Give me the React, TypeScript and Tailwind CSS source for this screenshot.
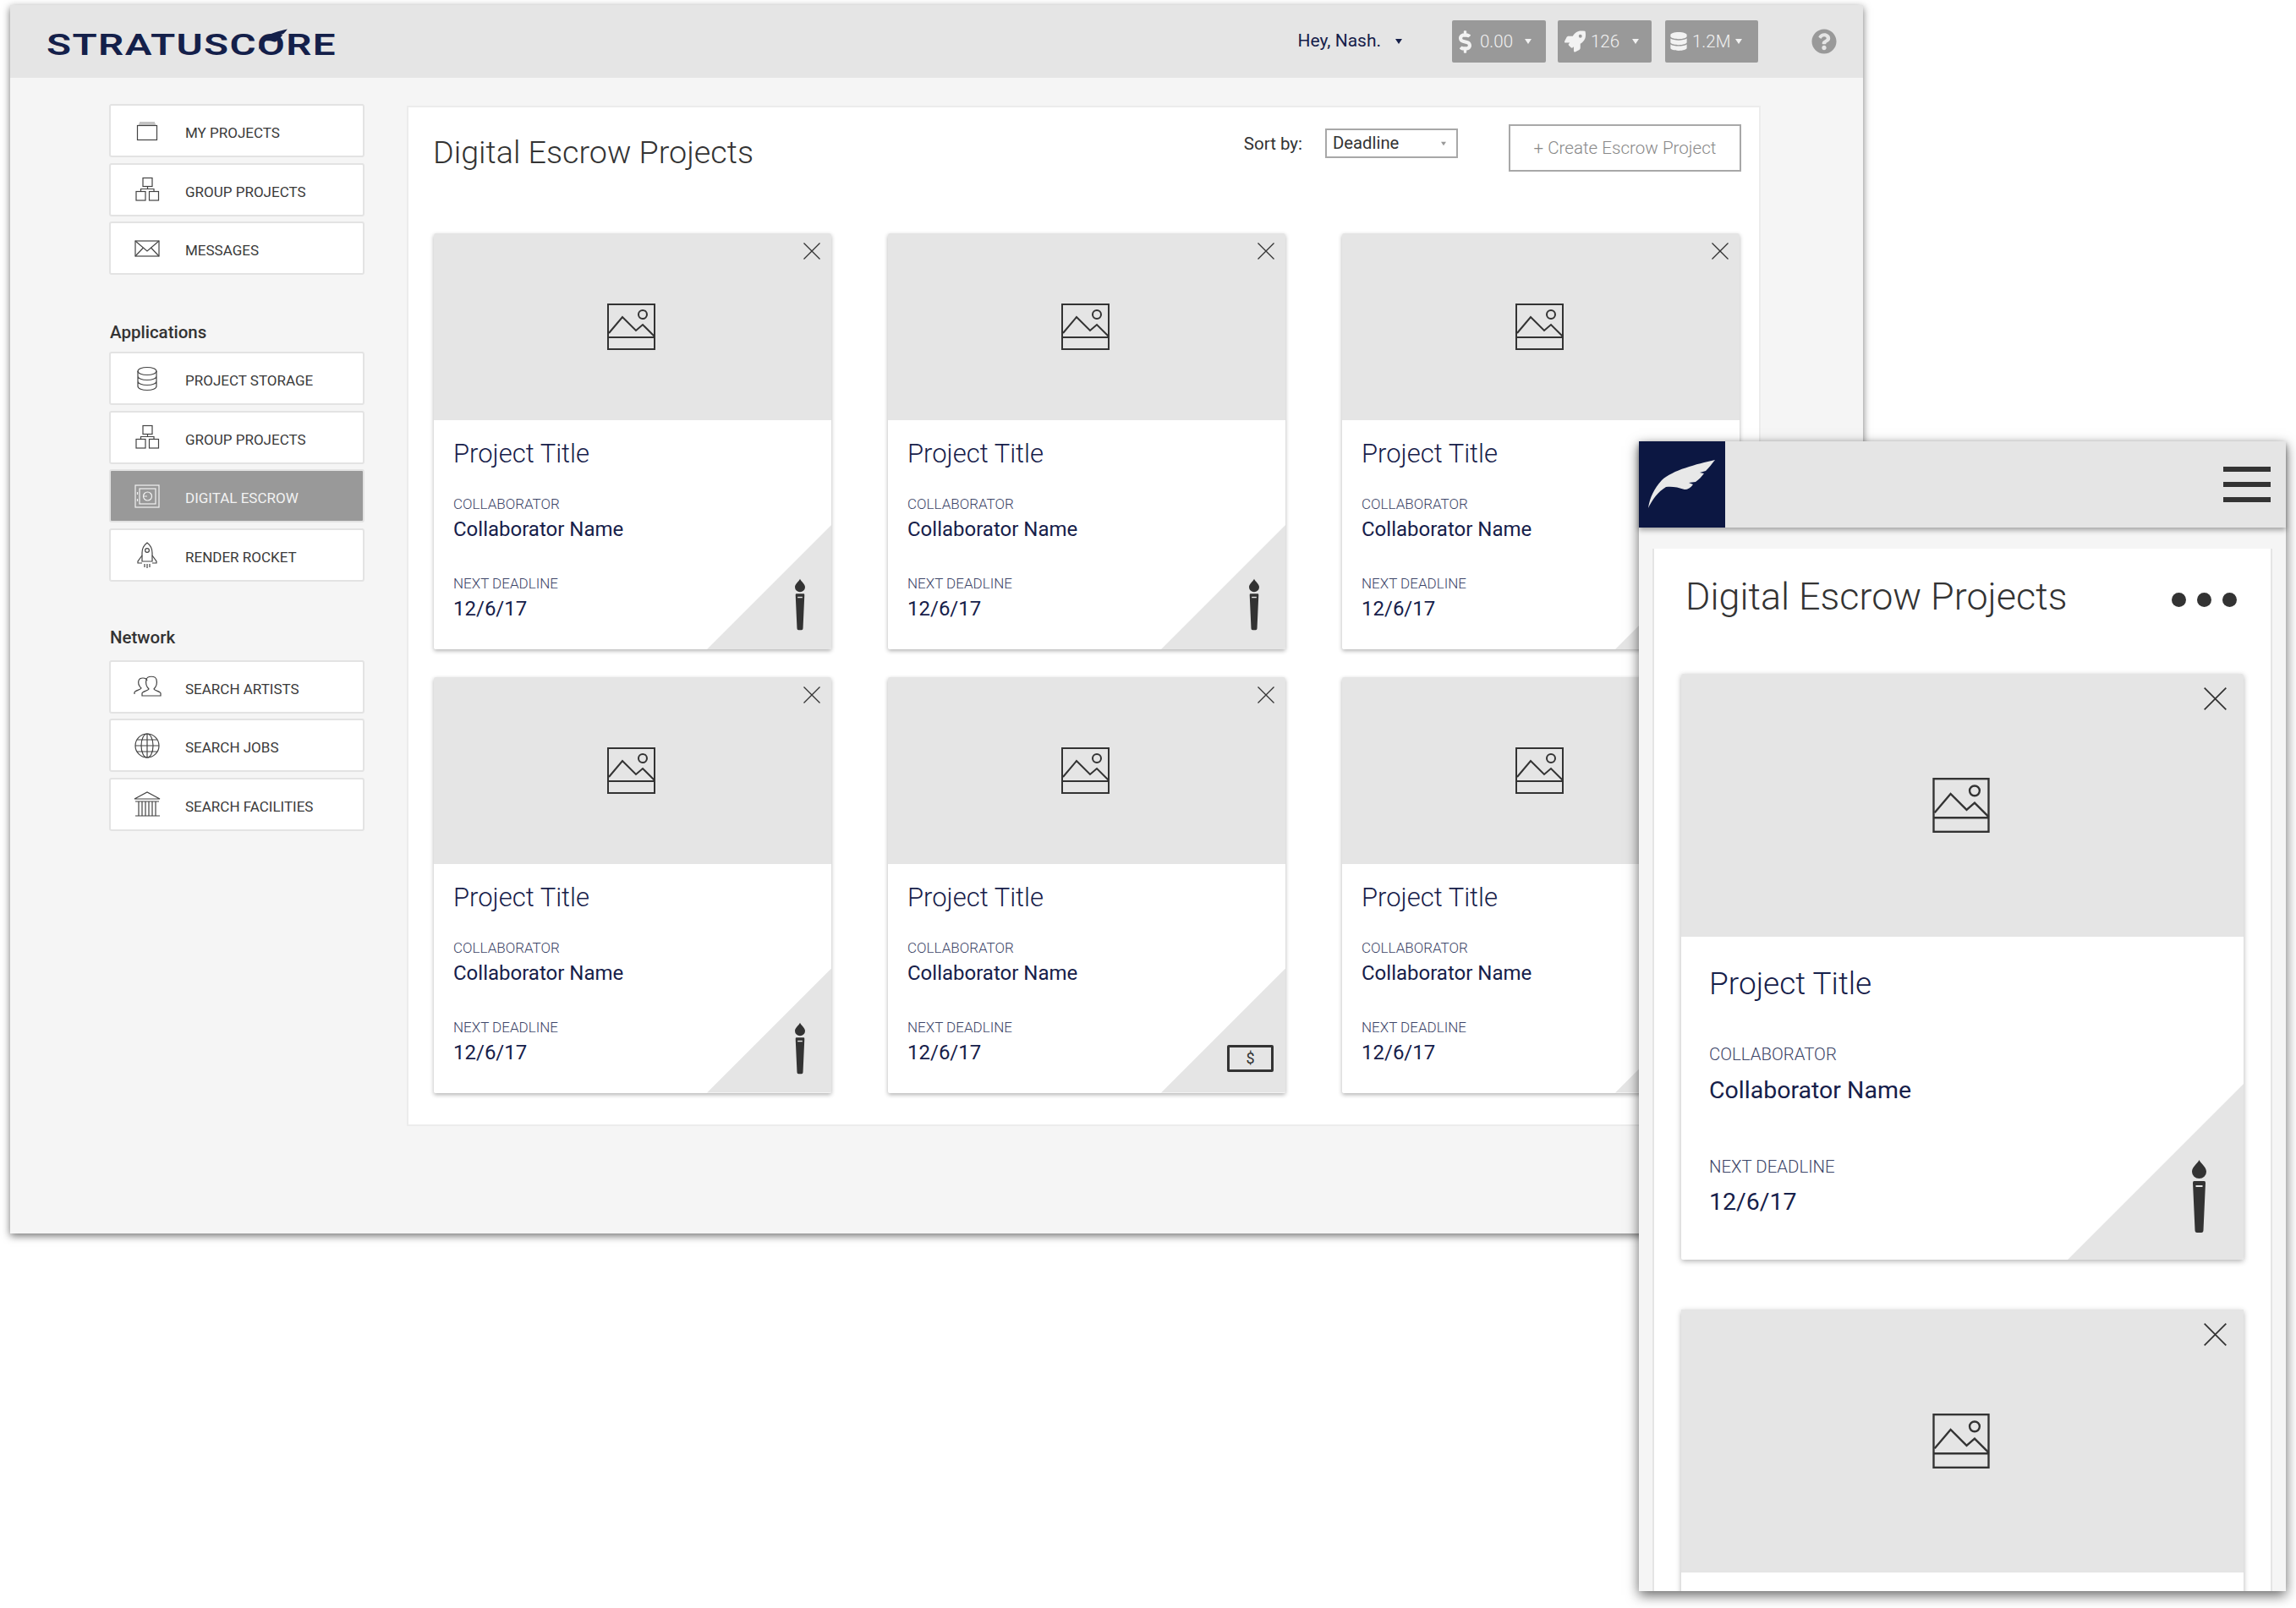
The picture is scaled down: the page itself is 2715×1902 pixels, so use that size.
import { ReactNode } from 'react';
import { FaDatabase, FaDollarSign, FaQuestionCircle, FaRocket } from 'react-icons/fa';

const Quill = ({ fill, className }: { fill: string; className: string }) => (
  <svg viewBox="0 0 102 102" className={className}>
    <path
      fill={fill}
      d="M11 79C13 66 18 56 27 46C40 34 68 27 90 22C86 27 83 31 79 35L72 37L77 38C74 42 71 45 67 48L59 49L64 51C61 55 58 57 54 57C46 54 38 53 32 54C22 60 16 69 11 79Z"
    />
  </svg>
);

const ImageIcon = ({ className }: { className: string }) => (
  <svg viewBox="0 0 57 55" className={className} fill="none" stroke="#333" strokeWidth="2">
    <rect x="1" y="1" width="55" height="53" />
    <path d="M1 40H56" />
    <path d="M2 35L18 16L34 32L42 25L56 39" />
    <circle cx="42" cy="13" r="5" />
  </svg>
);

const CloseIcon = ({ className }: { className: string }) => (
  <svg viewBox="0 0 20 20" className={className} fill="none" stroke="#333" strokeWidth="1.3">
    <path d="M0.5 0.5L19.5 19.5M19.5 0.5L0.5 19.5" />
  </svg>
);

const BrushIcon = ({ className }: { className: string }) => (
  <svg viewBox="0 0 17 86" className={className}>
    <path fill="#333" d="M8.5 0C10 4 17 8 17 14A8.5 8 0 0 1 0 14C0 8 7 4 8.5 0Z" />
    <path fill="#333" d="M2.5 25H14.5Q16 25 16 27L13.5 83Q13.5 86 11 86H6Q3.5 86 3.5 83L1 27Q1 25 2.5 25Z" />
    <rect x="4.5" y="30" width="8" height="2" fill="#e5e5e5" />
  </svg>
);

const BillIcon = () => (
  <div className="flex h-[32px] w-[55px] items-center justify-center rounded-[2px] border-[3px] border-[#333] text-[18px] leading-none text-[#333]">
    $
  </div>
);

// line icons for the side nav, all on a 34 box
const icons: Record<string, ReactNode> = {
  projects: (
    <>
      <rect x="5.5" y="10.5" width="23" height="17" />
      <path d="M8 7H26M7 9H27" stroke="#888" />
    </>
  ),
  group: (
    <>
      <rect x="12" y="3.5" width="11" height="10" />
      <rect x="4" y="19.5" width="11" height="10.5" />
      <rect x="19.5" y="19.5" width="11" height="10.5" />
      <path d="M17.5 13.5V16.5M9.5 19.5V16.5H25V19.5" />
    </>
  ),
  mail: (
    <>
      <rect x="3" y="8" width="28" height="18" />
      <path d="M3 8L17 20L31 8M3 26L12.5 16M31 26L21.5 16" />
    </>
  ),
  storage: (
    <>
      <ellipse cx="17" cy="8" rx="11" ry="4.5" />
      <path d="M6 8V26C6 28.5 11 30.5 17 30.5C23 30.5 28 28.5 28 26V8M6 14C6 16.5 11 18.5 17 18.5C23 18.5 28 16.5 28 14M6 20C6 22.5 11 24.5 17 24.5C23 24.5 28 22.5 28 20" />
    </>
  ),
  safe: (
    <>
      <rect x="3" y="4" width="28" height="26" />
      <rect x="8" y="8" width="19" height="18" />
      <circle cx="17.5" cy="17" r="5" />
      <path d="M12.5 17H17M5.5 12V15M5.5 20V23" />
    </>
  ),
  rocket: (
    <>
      <path d="M17 3C21 6 23 10 23 15V25H11V15C11 10 13 6 17 3Z" />
      <circle cx="17" cy="12" r="2.4" />
      <path d="M11 18L6 25V27H11M23 18L28 25V27H23M14 28V32M17 28V33M20 28V32" />
    </>
  ),
  people: (
    <>
      <path d="M2 26V24C2 22 9 21 10 19C7 16 6 13 7 10C8 6 16 6 17 10" />
      <path d="M11 28V25C11 23 18 22 19 20C16 17 15 13 16 9C17 4 27 4 28 9C29 13 28 17 25 20C26 22 33 23 33 25V28Z" />
    </>
  ),
  globe: (
    <>
      <circle cx="17" cy="17" r="14" />
      <ellipse cx="17" cy="17" rx="7" ry="14" />
      <path d="M17 3V31M3 17H31M5 10H29M5 24H29" />
    </>
  ),
  bank: (
    <>
      <path d="M2 11L17 3L32 11Z" />
      <path d="M3 14H31M3 31H32M7 14V31M11 14V31M15 14V31M19 14V31M23 14V31M27 14V31" />
    </>
  ),
};

const NavItem = ({ icon, label, active }: { icon: string; label: string; active?: boolean }) => (
  <div
    className={
      active
        ? 'flex h-[63px] items-center rounded-[3px] border-2 border-[#e3e3e3] bg-[#999999] text-[#f2f2f2]'
        : 'flex h-[63px] items-center rounded-[3px] border-2 border-[#e3e3e3] bg-white text-[#3a3a3a]'
    }
  >
    <svg
      viewBox="0 0 34 34"
      className="ml-[26px] h-[34px] w-[34px]"
      fill="none"
      stroke={active ? '#f2f2f2' : '#444'}
      strokeWidth="1.2"
    >
      {icons[icon]}
    </svg>
    <span className="mt-[6px] ml-[28px] text-[17px] leading-none">{label}</span>
  </div>
);

const NavGroup = ({ children }: { children: ReactNode }) => (
  <div className="flex flex-col gap-[6.5px]">{children}</div>
);

const Caret = ({ className }: { className: string }) => (
  <div className={`h-0 w-0 border-x-[4.5px] border-t-[6px] border-x-transparent ${className}`} />
);

const Card = ({ badge }: { badge?: 'bill' }) => (
  <div className="relative h-[492px] w-[470px] overflow-hidden rounded-[2px] bg-white shadow-[0_2px_5px_rgba(0,0,0,0.3)]">
    <div className="relative flex h-[221px] items-center justify-center bg-[#e5e5e5] pr-[3px]">
      <ImageIcon className="h-[55px] w-[57px]" />
      <CloseIcon className="absolute top-[11px] right-[13px] h-[20px] w-[20px]" />
    </div>
    <div className="absolute right-0 bottom-0 h-[147px] w-[147px] bg-[#e5e5e5] [clip-path:polygon(100%_0,100%_100%,0_100%)]" />
    {badge === 'bill' ? (
      <div className="absolute right-[14px] bottom-[25px]">
        <BillIcon />
      </div>
    ) : (
      <BrushIcon className="absolute right-[31px] bottom-[22px] h-[62px] w-[12px]" />
    )}
    <div className="relative pt-[20px] pl-[23px] text-[#16204a]">
      <div className="h-[40px] text-[31px] leading-[40px] font-light">Project Title</div>
      <div className="mt-[29px] h-[20px] text-[17px] leading-[20px] font-light text-[#3c4568]">COLLABORATOR</div>
      <div className="mt-[5px] h-[30px] text-[24px] leading-[30px]">Collaborator Name</div>
      <div className="mt-[39px] h-[20px] text-[17px] leading-[20px] font-light text-[#3c4568]">NEXT DEADLINE</div>
      <div className="mt-[5px] h-[30px] text-[24px] leading-[30px]">12/6/17</div>
    </div>
  </div>
);

const MobileThumb = () => (
  <div className="relative flex h-[311px] items-center justify-center bg-[#e5e5e5] pr-[3px]">
    <ImageIcon className="h-[65px] w-[68px]" />
    <CloseIcon className="absolute top-[16px] right-[20px] h-[27px] w-[27px]" />
  </div>
);

const MobileCard = () => (
  <div className="relative h-[693px] w-[665px] shrink-0 overflow-hidden rounded-[2px] bg-white shadow-[0_2px_6px_rgba(0,0,0,0.3)]">
    <MobileThumb />
    <div className="absolute right-0 bottom-0 h-[208px] w-[208px] bg-[#e5e5e5] [clip-path:polygon(100%_0,100%_100%,0_100%)]" />
    <BrushIcon className="absolute right-[44px] bottom-[32px] h-[86px] w-[17px]" />
    <div className="relative pt-[31px] pl-[33px] text-[#16204a]">
      <div className="h-[50px] text-[37px] leading-[50px] font-light">Project Title</div>
      <div className="mt-[46px] h-[24px] text-[20.4px] leading-[24px] font-light text-[#3c4568]">COLLABORATOR</div>
      <div className="mt-[13px] h-[36px] text-[28.5px] leading-[36px]">Collaborator Name</div>
      <div className="mt-[60px] h-[24px] text-[20.4px] leading-[24px] font-light text-[#3c4568]">NEXT DEADLINE</div>
      <div className="mt-[12px] h-[36px] text-[28.5px] leading-[36px]">12/6/17</div>
    </div>
  </div>
);

const DesktopWindow = () => (
  <div className="absolute top-[6px] left-[12px] flex h-[1453px] w-[2191px] flex-col bg-[#f5f5f5] shadow-[0_3px_9px_rgba(0,0,0,0.55)]">
    <header className="flex h-[86px] shrink-0 items-center bg-[#e5e5e5]">
      <div className="relative mt-[10px] ml-[43px] h-[30px] w-[340px]">
        <span className="block origin-left scale-x-[1.36] text-[35px] leading-[30px] font-semibold tracking-[1px] whitespace-nowrap text-[#14204a]">
          STRATUSCORE
        </span>
        <Quill fill="#14204a" className="absolute top-[-14px] left-[246px] h-[44px] w-[44px]" />
      </div>
      <div className="ml-auto flex items-center text-[21px] text-[#16204a]">
        <span>Hey, Nash.</span>
        <Caret className="ml-[17px] border-t-[#16204a]" />
      </div>
      <div className="ml-[59px] flex h-[50px] w-[111px] items-center rounded-[2px] bg-[#999999] pl-[8px] text-[20.5px] font-light text-[#f2f2f2]">
        <FaDollarSign className="h-[27px] w-[15px]" />
        <span className="ml-[10px]">0.00</span>
        <Caret className="ml-[14px] border-t-[#f2f2f2]" />
      </div>
      <div className="ml-[14px] flex h-[50px] w-[111px] items-center rounded-[2px] bg-[#999999] pl-[8px] text-[20.5px] font-light text-[#f2f2f2]">
        <FaRocket className="h-[26px] w-[25px]" />
        <span className="ml-[6px]">126</span>
        <Caret className="ml-[15px] border-t-[#f2f2f2]" />
      </div>
      <div className="ml-[16px] flex h-[50px] w-[110px] items-center rounded-[2px] bg-[#999999] pl-[6px] text-[20.5px] font-light text-[#f2f2f2]">
        <FaDatabase className="h-[22px] w-[20px]" />
        <span className="ml-[6px]">1.2M</span>
        <Caret className="ml-[6px] border-t-[#f2f2f2]" />
      </div>
      <FaQuestionCircle className="mr-[31px] ml-[63px] h-[30px] w-[30px] text-[#999999]" />
    </header>
    <div className="flex pt-[31px] pl-[117px]">
      <aside className="w-[302px] shrink-0">
        <NavGroup>
          <NavItem icon="projects" label="MY PROJECTS" />
          <NavItem icon="group" label="GROUP PROJECTS" />
          <NavItem icon="mail" label="MESSAGES" />
        </NavGroup>
        <h3 className="mt-[54px] mb-[9px] ml-[1px] h-[28px] text-[20.5px] leading-[28px] font-medium text-[#333]">Applications</h3>
        <NavGroup>
          <NavItem icon="storage" label="PROJECT STORAGE" />
          <NavItem icon="group" label="GROUP PROJECTS" />
          <NavItem icon="safe" label="DIGITAL ESCROW" active />
          <NavItem icon="rocket" label="RENDER ROCKET" />
        </NavGroup>
        <h3 className="mt-[52px] mb-[13px] ml-[1px] h-[28px] text-[20.5px] leading-[28px] font-medium text-[#333]">Network</h3>
        <NavGroup>
          <NavItem icon="people" label="SEARCH ARTISTS" />
          <NavItem icon="globe" label="SEARCH JOBS" />
          <NavItem icon="bank" label="SEARCH FACILITIES" />
        </NavGroup>
      </aside>
      {/* projects panel */}
      <main className="mt-[2px] ml-[50px] h-[1207px] w-[1601px] border-2 border-[#ececec] bg-white pt-[20px] pl-[29px]">
        <div className="flex h-[56px] items-start">
          <h1 className="mt-[11px] text-[37.7px] leading-[44px] font-light text-[#333]">Digital Escrow Projects</h1>
          <span className="mt-[11px] ml-auto text-[20.5px] leading-[24px] text-[#333]">Sort by:</span>
          <div className="mt-[5px] ml-[27px] flex h-[35px] w-[157px] items-center justify-between border-2 border-[#a8a8a8] pr-[11px] pl-[7px] text-[20.3px] text-[#333]">
            Deadline
            <Caret className="scale-75 border-t-[#999999]" />
          </div>
          <div className="mr-[21px] ml-[60px] flex h-[56px] w-[275px] items-center justify-center border-2 border-[#a8a8a8] text-[20.6px] font-light text-[#888]">
            + Create Escrow Project
          </div>
        </div>
        <div className="mt-[73px] ml-[1px] grid w-[1544px] grid-cols-3 gap-x-[67px] gap-y-[32.5px]">
          <Card />
          <Card />
          <Card />
          <Card />
          <Card badge="bill" />
          <Card />
        </div>
      </main>
    </div>
  </div>
);

const MobileWindow = () => (
  <div className="absolute top-[522px] left-[1938px] flex h-[1360px] w-[765px] flex-col bg-[#f5f5f5] shadow-[0_5px_14px_rgba(0,0,0,0.6)]">
    <header className="z-10 flex h-[102px] shrink-0 items-center justify-between bg-[#e5e5e5] shadow-[0_3px_6px_rgba(0,0,0,0.35)]">
      <div className="h-[102px] w-[102px] bg-[#0c1742]">
        <Quill fill="#e8e8e8" className="h-[102px] w-[102px]" />
      </div>
      <div className="mr-[18px] flex w-[56px] flex-col gap-[12px]">
        <div className="h-[6px] bg-[#333]" />
        <div className="h-[6px] bg-[#333]" />
        <div className="h-[6px] bg-[#333]" />
      </div>
    </header>
    <div className="min-h-0 flex-1 overflow-hidden px-[16px] pt-[25px]">
      <div className="h-full border-x-2 border-[#e5e5e5] bg-white pt-[31px] pl-[32px]">
        <div className="flex h-[52px] items-center">
          <h1 className="ml-[5px] text-[44.9px] leading-[52px] font-light text-[#333]">Digital Escrow Projects</h1>
          <div className="mt-[6px] ml-auto mr-[40px] flex gap-[13px]">
            <div className="h-[17px] w-[17px] rounded-full bg-[#333]" />
            <div className="h-[17px] w-[17px] rounded-full bg-[#333]" />
            <div className="h-[17px] w-[17px] rounded-full bg-[#333]" />
          </div>
        </div>
        <div className="mt-[65px] flex flex-col gap-[59px]">
          <MobileCard />
          {/* second card runs off the bottom of the phone, only its picture shows */}
          <div className="h-[693px] w-[665px] shrink-0 rounded-[2px] bg-white shadow-[0_2px_6px_rgba(0,0,0,0.3)]">
            <MobileThumb />
          </div>
        </div>
      </div>
    </div>
  </div>
);

export default function App() {
  return (
    <div className="relative h-[1902px] w-[2715px] overflow-hidden bg-white [font-family:Roboto,sans-serif]">
      <DesktopWindow />
      <MobileWindow />
    </div>
  );
}
